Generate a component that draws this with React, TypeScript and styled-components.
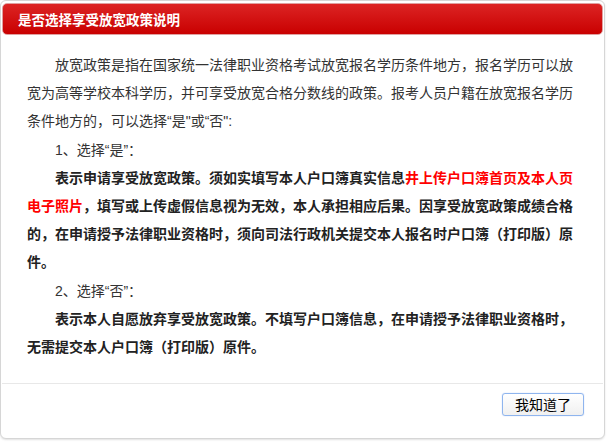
import React from "react";
import styled, { createGlobalStyle } from "styled-components";

const GlobalStyle = createGlobalStyle`
  html, body {
    margin: 0;
    padding: 0;
    background: #ffffff;
  }
  body {
    font-family: "Liberation Sans", "Noto Sans CJK SC", sans-serif;
    width: 607px;
    height: 442px;
    overflow: hidden;
  }
`;

const Dialog = styled.div`
  box-sizing: border-box;
  width: 605px;
  height: 439px;
  border: 1px solid #d6d6d6;
  border-radius: 6px;
  background: #ffffff;
  padding: 2px 1px 0 1px;
  display: flex;
  flex-direction: column;
  box-shadow: 0 1px 2px rgba(0, 0, 0, 0.12);
`;

const Header = styled.div`
  box-sizing: border-box;
  height: 32px;
  border-radius: 5px;
  border: 1px solid #e0a0a0;
  background: linear-gradient(to bottom, #dc2424 0%, #c90000 100%);
  display: flex;
  align-items: center;
  padding-left: 15px;
`;

const Title = styled.h3`
  margin: 0;
  color: #ffffff;
  font-family: "Noto Sans CJK SC", sans-serif;
  font-size: 13.5px;
  font-weight: bold;
`;

const Body = styled.div`
  padding: 16px 28px 0 25px;
  flex: 1;
  color: #333333;
  font-size: 14px;
  line-height: 28.2px;
`;

const Para = styled.p<{ $bold?: boolean }>`
  margin: 0;
  text-indent: 2em;
  font-weight: ${(p) => (p.$bold ? "bold" : "normal")};
  color: ${(p) => (p.$bold ? "#222222" : "#333333")};
`;

const Red = styled.span`
  color: #ff0000;
`;

const Footer = styled.div`
  border-top: 1px solid #e8e8e8;
  height: 55px;
  display: flex;
  justify-content: flex-end;
  align-items: flex-start;
  padding: 9px 19px 0 0;
  box-sizing: border-box;
`;

const Button = styled.button`
  box-sizing: border-box;
  width: 82px;
  height: 23px;
  border: 1px solid #8fb5ee;
  border-radius: 3px;
  background: linear-gradient(to bottom, #ffffff 0%, #f0f0f0 100%);
  font-family: "Noto Sans CJK SC", sans-serif;
  font-size: 14px;
  color: #000000;
  padding: 0;
  line-height: 21px;
  box-shadow: 0 0 1px rgba(90, 140, 230, 0.6);
`;

export default function App() {
  return (
    <>
      <GlobalStyle />
      <Dialog>
        <Header>
          <Title>是否选择享受放宽政策说明</Title>
        </Header>
        <Body>
          <Para>
            放宽政策是指在国家统一法律职业资格考试放宽报名学历条件地方，报名学历可以放宽为高等学校本科学历，并可享受放宽合格分数线的政策。报考人员户籍在放宽报名学历条件地方的，可以选择“是"或“否":
          </Para>
          <Para>1、选择“是”：</Para>
          <Para $bold>
            表示申请享受放宽政策。须如实填写本人户口簿真实信息
            <Red>井上传户口簿首页及本人页电子照片</Red>
            ，填写或上传虚假信息视为无效，本人承担相应后果。因享受放宽政策成绩合格的，在申请授予法律职业资格时，须向司法行政机关提交本人报名时户口簿（打印版）原件。
          </Para>
          <Para>2、选择“否”：</Para>
          <Para $bold>
            表示本人自愿放弃享受放宽政策。不填写户口簿信息，在申请授予法律职业资格时，无需提交本人户口簿（打印版）原件。
          </Para>
        </Body>
        <Footer>
          <Button>我知道了</Button>
        </Footer>
      </Dialog>
    </>
  );
}
